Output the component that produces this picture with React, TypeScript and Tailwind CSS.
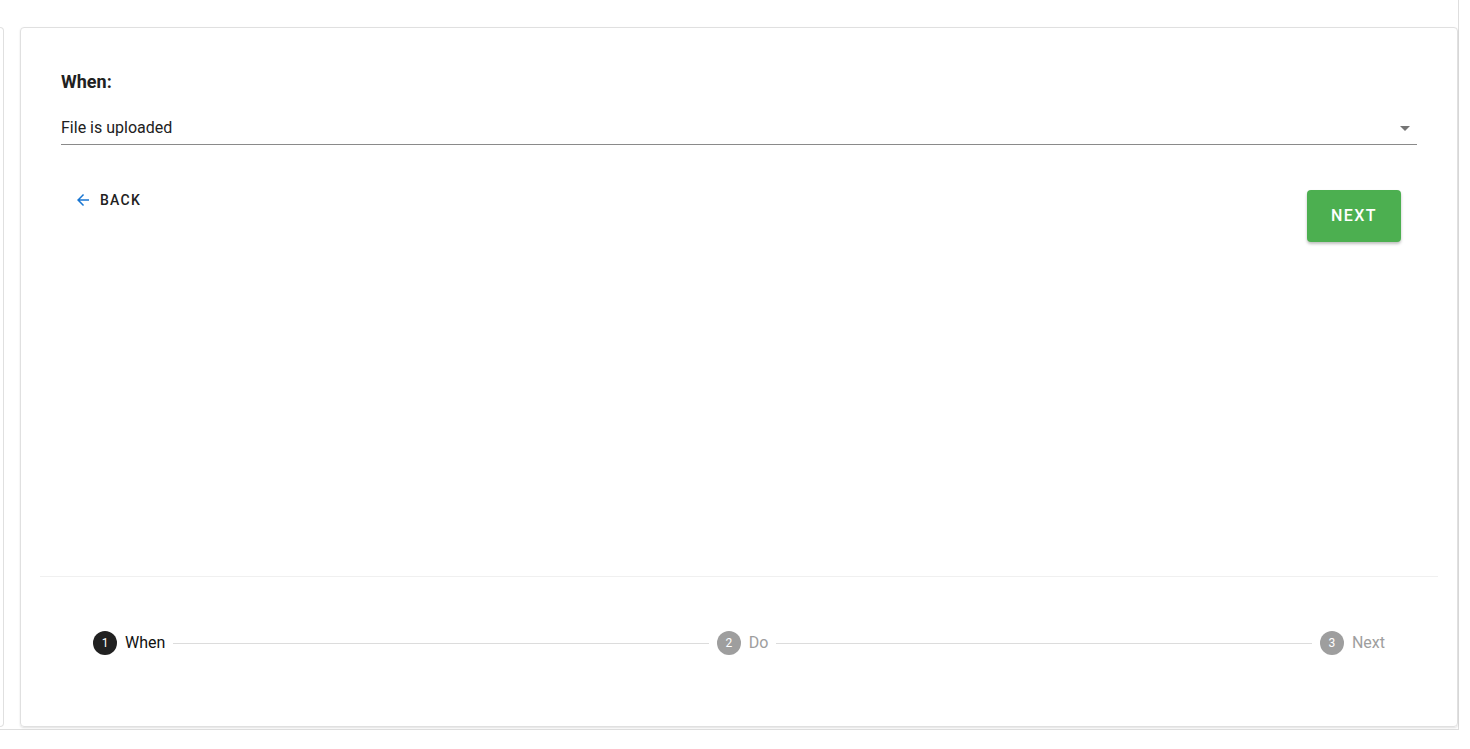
import React from 'react';

const steps = [
  { n: 1, label: 'When', active: true },
  { n: 2, label: 'Do', active: false },
  { n: 3, label: 'Next', active: false },
];

function ArrowBack() {
  return (
    <svg width="18" height="18" viewBox="0 0 24 24" className="fill-[#1976d2]">
      <path d="M20 11H7.83l5.59-5.59L12 4l-8 8 8 8 1.41-1.41L7.83 13H20v-2z" />
    </svg>
  );
}

function Step({ n, label, active }: { n: number; label: string; active: boolean }) {
  return (
    <div className="flex items-center gap-2 shrink-0">
      <div
        className={
          active
            ? 'w-6 h-6 rounded-full bg-[#212121] text-white text-[12px] flex items-center justify-center'
            : 'w-6 h-6 rounded-full bg-[#9e9e9e] text-white text-[12px] flex items-center justify-center'
        }
      >
        {n}
      </div>
      <span className={active ? 'text-[16px] text-[#111]' : 'text-[16px] text-[#9e9e9e]'}>{label}</span>
    </div>
  );
}

export default function App() {
  return (
    <div className="min-h-screen bg-white" style={{ fontFamily: 'Roboto, "Liberation Sans", sans-serif' }}>
      <div className="w-[1459px] h-[730px] border-r border-b border-[#dedede] flex pt-[27px] pb-[2px]">
        {/* left panel edge */}
        <div className="w-[4px] h-[700px] border-t border-r border-b border-[#e0e0e0] rounded-br-[4px] rounded-tr-[4px]" />

        {/* main card */}
        <div className="ml-[16px] w-[1439px] h-[700px] border border-[#e0e0e0] rounded-[4px] shadow-[0_1px_2px_rgba(0,0,0,0.12)] flex flex-col">
          <div className="h-[548px] px-10 pt-[42px]">
            <h2 className="text-[18px] leading-6 font-bold text-[#212121]">When:</h2>
            <div className="mt-4 pt-[6px] pb-[4px] border-b border-[#8a8a8a] flex items-center justify-between">
              <span className="text-[16px] leading-6 text-[#212121]">File is uploaded</span>
              <svg width="24" height="24" viewBox="0 0 24 24" className="fill-[#757575]">
                <path d="M7 10l5 5 5-5z" />
              </svg>
            </div>

            <div className="flex justify-between items-start mt-[37px]">
              <button className="h-9 ml-3 pl-[1px] pr-2 flex items-center gap-[8px] text-[14px] font-medium tracking-[1.25px] text-[#212121]">
                <ArrowBack />
                BACK
              </button>
              <button className="mt-2 mr-4 h-[52px] w-[94px] rounded-[4px] bg-[#4caf50] text-white text-[16px] font-medium tracking-[1.5px] shadow-[0_2px_3px_rgba(0,0,0,0.25)]">
                NEXT
              </button>
            </div>
          </div>

          <div className="mx-[19px] h-px bg-[#f0f0f0]" />

          <div className="flex-1 px-[72px] pt-[54px]">
            <div className="flex items-center">
              {steps.map((s, i) => (
                <React.Fragment key={s.n}>
                  {i > 0 && <div className="flex-1 h-px bg-[#dcdcdc] mx-2" />}
                  <Step n={s.n} label={s.label} active={s.active} />
                </React.Fragment>
              ))}
            </div>
          </div>
        </div>
      </div>
    </div>
  );
}
